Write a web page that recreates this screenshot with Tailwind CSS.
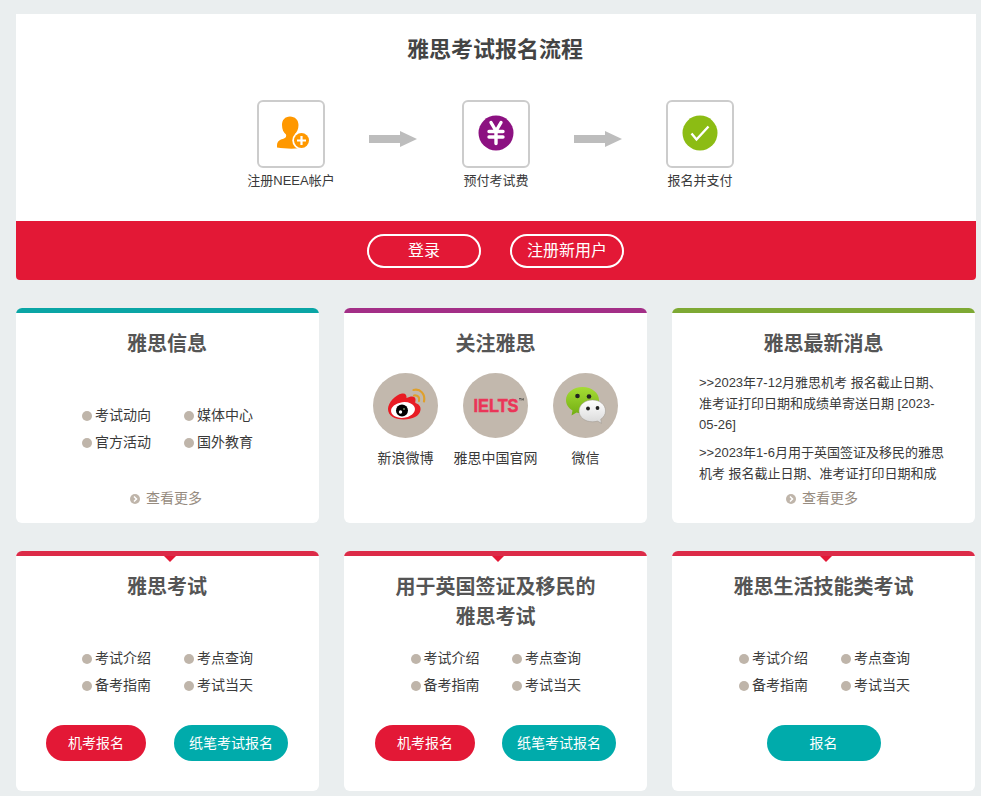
<!DOCTYPE html>
<html lang="zh-CN">
<head>
    <meta charset="UTF-8">
    <meta name="viewport" content="width=device-width, initial-scale=1.0">
    <title>雅思考试报名</title>
    <script src="https://cdn.jsdelivr.net/npm/@tailwindcss/browser@4"></script>
</head>
<body class="bg-[#eaeeef] text-[#3a3a3a] font-['Liberation_Sans','Noto_Sans_CJK_SC',sans-serif] overflow-hidden">
    <div class="w-[960px] ml-4 pt-3.5">

        <!-- Registration steps -->
        <section class="rounded-b overflow-hidden bg-white">
            <div class="h-[207px] pt-[21px]">
                <h1 class="text-[22px] leading-[30px] font-bold text-center text-[#444] pr-0.5">雅思考试报名流程</h1>
                <div class="flex justify-center mt-[35px] pr-px">
                    <div class="w-[100px] flex flex-col items-center">
                        <div class="size-[68px] border-2 border-[#ccc] rounded-md flex items-center justify-center">
                            <svg class="size-16" viewBox="0 0 64 64">
                                <path d="M31 14.500c5 0 8.500 3.500 8.500 8.500 0 4-1.500 7-3.500 9v3c0 2 11 3 11 8.500v2c-9 1.500-20 1.500-29 0v-2c0-5 4-6 7-7 2-.7 2.500-2 2-4-2.500-2-4-5-4-9.500 0-5 3-8.500 8-8.500z" fill="#ff9800"/>
                                <circle cx="42.500" cy="38.500" r="9.200" fill="#fff"/>
                                <circle cx="42.500" cy="38.500" r="7.500" fill="#ff9800"/>
                                <path d="M42.500 34v9M38 38.500h9" stroke="#fff" stroke-width="2.200"/>
                            </svg>
                        </div>
                        <p class="mt-1 text-[13px] leading-[18px] whitespace-nowrap">注册NEEA帐户</p>
                    </div>
                    <svg class="w-[48px] h-4 ml-7 mr-[29px] mt-[31px]" viewBox="0 0 48 16"><path d="M0 4h31V0l17 8-17 8v-4H0z" fill="#bdbdbd"/></svg>
                    <div class="w-[100px] flex flex-col items-center">
                        <div class="size-[68px] border-2 border-[#ccc] rounded-md flex items-center justify-center">
                            <svg class="size-16" viewBox="0 0 64 64">
                                <circle cx="32" cy="31" r="17.500" fill="#8c1181"/>
                                <path d="M27 20.500l5 8.500 5-8.500M32 29v12.500M25 29.500h14M25 35h14" fill="none" stroke="#fff" stroke-width="3.400" stroke-linecap="round"/>
                            </svg>
                        </div>
                        <p class="mt-1 text-[13px] leading-[18px] whitespace-nowrap">预付考试费</p>
                    </div>
                    <svg class="w-[48px] h-4 mx-7 mt-[31px]" viewBox="0 0 48 16"><path d="M0 4h31V0l17 8-17 8v-4H0z" fill="#bdbdbd"/></svg>
                    <div class="w-[100px] flex flex-col items-center">
                        <div class="size-[68px] border-2 border-[#ccc] rounded-md flex items-center justify-center">
                            <svg class="size-16" viewBox="0 0 64 64">
                                <circle cx="32" cy="31" r="17.500" fill="#8cbc14"/>
                                <path d="M23.500 31.500l5 6 12-13" fill="none" stroke="#fff" stroke-width="2.400"/>
                            </svg>
                        </div>
                        <p class="mt-1 text-[13px] leading-[18px] whitespace-nowrap">报名并支付</p>
                    </div>
                </div>
            </div>
            <div class="h-[59px] bg-[#e31836] flex justify-center gap-[29px] pt-[13px] pr-px text-white">
                <a class="w-[114px] h-[34px] border-2 border-white rounded-full text-center leading-[30px]">登录</a>
                <a class="w-[114px] h-[34px] border-2 border-white rounded-full text-center leading-[30px]">注册新用户</a>
            </div>
        </section>

        <!-- Info cards -->
        <div class="flex gap-[25px] mt-7">
            <section class="w-[303px] h-[215px] bg-white rounded-md overflow-hidden flex flex-col">
                <div class="h-[5px] shrink-0 bg-[#0aa5a5]"></div>
                <h2 class="mt-4 text-xl leading-[30px] font-bold text-center text-[#555] pr-px">雅思信息</h2>
                <ul class="grid grid-cols-[102px_102px] ml-[66px] mt-[43px] text-sm leading-[27px]">
                    <li class="flex items-center gap-[3px]"><i class="size-2.5 rounded-full bg-[#bfb5aa]"></i>考试动向</li>
                    <li class="flex items-center gap-[3px]"><i class="size-2.5 rounded-full bg-[#bfb5aa]"></i>媒体中心</li>
                    <li class="flex items-center gap-[3px]"><i class="size-2.5 rounded-full bg-[#bfb5aa]"></i>官方活动</li>
                    <li class="flex items-center gap-[3px]"><i class="size-2.5 rounded-full bg-[#bfb5aa]"></i>国外教育</li>
                </ul>
                <a class="mt-8 pr-[3px] flex justify-center items-center gap-1.5 text-sm text-[#968b80]">
                    <svg class="size-2.5 mt-px" viewBox="0 0 10 10"><circle cx="5" cy="5" r="5" fill="#bfb5aa"/><path d="M4 2.500L6.500 5 4 7.500" fill="none" stroke="#fff" stroke-width="1.500"/></svg>
                    查看更多
                </a>
            </section>

            <section class="w-[303px] h-[215px] bg-white rounded-md overflow-hidden flex flex-col">
                <div class="h-[5px] shrink-0 bg-[#a32f87]"></div>
                <h2 class="mt-4 text-xl leading-[30px] font-bold text-center text-[#555]">关注雅思</h2>
                <div class="flex justify-center mt-3.5 text-sm">
                    <div class="w-[90px] flex flex-col items-center">
                        <svg class="size-[65px]" viewBox="0 0 65 65">
                            <circle cx="32.500" cy="32.500" r="32.500" fill="#c2b8ad"/>
                            <path d="M15 36c0-6 7-14 14-15.500 3-.6 5 1 4.500 4.500 4-2 9-2.500 9 1.500 0 2-.5 3 0 3.500 3 1 5.500 3 5 7-.8 6-8 9.500-17 9.500-9 0-15.500-4-15.500-10.500z" fill="#e81c24"/>
                            <ellipse cx="30" cy="37" rx="12" ry="7.800" fill="#fff" transform="rotate(-7 30 37)"/>
                            <circle cx="29" cy="37.500" r="6" fill="#000"/>
                            <circle cx="27.500" cy="39" r="1.700" fill="#fff"/>
                            <circle cx="31" cy="36" r=".8" fill="#bde8b0"/>
                            <path d="M40.500 17c7-1.500 12 4 10.500 11.500M41 22.500c4-.5 6 2 5 5.500" fill="none" stroke="#dfa02c" stroke-width="2.200" stroke-linecap="round"/>
                        </svg>
                        <p class="mt-2.5">新浪微博</p>
                    </div>
                    <div class="w-[90px] flex flex-col items-center">
                        <svg class="size-[65px]" viewBox="0 0 65 65">
                            <circle cx="32.500" cy="32.500" r="32.500" fill="#c2b8ad"/>
                            <text x="10.500" y="38.500" textLength="45" lengthAdjust="spacingAndGlyphs" class="text-[19px] font-bold" fill="#ea3558" stroke="#ea3558" stroke-width=".6">IELTS</text>
                            <path d="M56 25.500h2M57 25.500v2M58.800 27.500v-2l.8 1 .8-1v2" fill="none" stroke="#333" stroke-width=".6"/>
                        </svg>
                        <p class="mt-2.5 whitespace-nowrap">雅思中国官网</p>
                    </div>
                    <div class="w-[90px] flex flex-col items-center">
                        <svg class="size-[65px]" viewBox="0 0 65 65">
                            <defs>
                                <linearGradient id="green" x2="0" y2="1"><stop stop-color="#a5dc35"/><stop offset="1" stop-color="#72ae12"/></linearGradient>
                                <linearGradient id="gray" x2="0" y2="1"><stop stop-color="#fff"/><stop offset="1" stop-color="#d9d9d9"/></linearGradient>
                            </defs>
                            <circle cx="32.500" cy="32.500" r="32.500" fill="#c2b8ad"/>
                            <path d="M29.500 14c9.500 0 16.500 6 16.500 13s-7 13.500-16.500 13.500c-2 0-4-.3-6-.9L18.500 42.500l1-5C15.500 35 13 31.500 13 27c0-7 7-13 16.500-13z" fill="url(#green)"/>
                            <circle cx="24.500" cy="23" r="2.300" fill="#222"/><circle cx="36" cy="23.500" r="2.300" fill="#222"/>
                            <path d="M39.500 27c7.500 0 13 4.800 13 11 0 3.500-2 6.500-4.800 8.300l.8 4-4-2.200c-1.500.5-3.300.7-5 .7-7.500 0-13.500-4.600-13.500-10.800S32 27 39.500 27z" fill="url(#gray)" stroke="#9b948c" stroke-width=".5"/>
                            <circle cx="35" cy="35.500" r="1.900" fill="#222"/><circle cx="44.500" cy="35" r="1.900" fill="#222"/>
                        </svg>
                        <p class="mt-2.5">微信</p>
                    </div>
                </div>
            </section>

            <section class="w-[303px] h-[215px] bg-white rounded-md overflow-hidden flex flex-col">
                <div class="h-[5px] shrink-0 bg-[#7ea934]"></div>
                <h2 class="mt-4 text-xl leading-[30px] font-bold text-center text-[#555]">雅思最新消息</h2>
                <div class="ml-[27px] mt-[13px] h-[113px] overflow-hidden text-[13px] leading-[21px] whitespace-nowrap">
                    <p class="mb-[7px]">&gt;&gt;2023年7-12月雅思机考 报名截止日期、<br>准考证打印日期和成绩单寄送日期 [2023-<br>05-26]</p>
                    <p>&gt;&gt;2023年1-6月用于英国签证及移民的雅思<br>机考 报名截止日期、准考证打印日期和成</p>
                </div>
                <a class="mt-[3px] pr-[3px] flex justify-center items-center gap-1.5 text-sm text-[#968b80]">
                    <svg class="size-2.5 mt-px" viewBox="0 0 10 10"><circle cx="5" cy="5" r="5" fill="#bfb5aa"/><path d="M4 2.500L6.500 5 4 7.500" fill="none" stroke="#fff" stroke-width="1.500"/></svg>
                    查看更多
                </a>
            </section>
        </div>

        <!-- Exam cards -->
        <div class="flex gap-[25px] mt-7">
            <section class="w-[303px] h-60 bg-white rounded-md overflow-hidden flex flex-col">
                <div class="h-[5px] shrink-0 bg-[#dc2b48]"></div>
                <svg class="w-3 h-1.5 ml-[148px] shrink-0" viewBox="0 0 12 6"><path d="M0 0h12L6 6z" fill="#e31836"/></svg>
                <h2 class="mt-2.5 h-[60px] text-xl leading-[30px] font-bold text-center text-[#555] pr-px">雅思考试</h2>
                <ul class="grid grid-cols-[102px_102px] ml-[66px] mt-[13px] text-sm leading-[27px]">
                    <li class="flex items-center gap-[3px]"><i class="size-2.5 rounded-full bg-[#bfb5aa]"></i>考试介绍</li>
                    <li class="flex items-center gap-[3px]"><i class="size-2.5 rounded-full bg-[#bfb5aa]"></i>考点查询</li>
                    <li class="flex items-center gap-[3px]"><i class="size-2.5 rounded-full bg-[#bfb5aa]"></i>备考指南</li>
                    <li class="flex items-center gap-[3px]"><i class="size-2.5 rounded-full bg-[#bfb5aa]"></i>考试当天</li>
                </ul>
                <div class="flex gap-7 ml-[30px] mt-[26px] text-sm leading-9 text-white text-center">
                    <a class="w-[100px] h-9 rounded-full bg-[#e31836]">机考报名</a>
                    <a class="w-[114px] h-9 rounded-full bg-[#00abab]">纸笔考试报名</a>
                </div>
            </section>

            <section class="w-[303px] h-60 bg-white rounded-md overflow-hidden flex flex-col">
                <div class="h-[5px] shrink-0 bg-[#dc2b48]"></div>
                <svg class="w-3 h-1.5 ml-[148px] shrink-0" viewBox="0 0 12 6"><path d="M0 0h12L6 6z" fill="#e31836"/></svg>
                <h2 class="mt-2.5 h-[60px] text-xl leading-[30px] font-bold text-center text-[#555]">用于英国签证及移民的<br>雅思考试</h2>
                <ul class="grid grid-cols-[101.500px_102px] ml-[66.500px] mt-[13px] text-sm leading-[27px]">
                    <li class="flex items-center gap-[3px]"><i class="size-2.5 rounded-full bg-[#bfb5aa]"></i>考试介绍</li>
                    <li class="flex items-center gap-[3px]"><i class="size-2.5 rounded-full bg-[#bfb5aa]"></i>考点查询</li>
                    <li class="flex items-center gap-[3px]"><i class="size-2.5 rounded-full bg-[#bfb5aa]"></i>备考指南</li>
                    <li class="flex items-center gap-[3px]"><i class="size-2.5 rounded-full bg-[#bfb5aa]"></i>考试当天</li>
                </ul>
                <div class="flex gap-[27px] ml-[31px] mt-[26px] text-sm leading-9 text-white text-center">
                    <a class="w-[100px] h-9 rounded-full bg-[#e31836]">机考报名</a>
                    <a class="w-[114px] h-9 rounded-full bg-[#00abab]">纸笔考试报名</a>
                </div>
            </section>

            <section class="w-[303px] h-60 bg-white rounded-md overflow-hidden flex flex-col">
                <div class="h-[5px] shrink-0 bg-[#dc2b48]"></div>
                <svg class="w-3 h-1.5 ml-[148px] shrink-0" viewBox="0 0 12 6"><path d="M0 0h12L6 6z" fill="#e31836"/></svg>
                <h2 class="mt-2.5 h-[60px] text-xl leading-[30px] font-bold text-center text-[#555]">雅思生活技能类考试</h2>
                <ul class="grid grid-cols-[102px_102px] ml-[67px] mt-[13px] text-sm leading-[27px]">
                    <li class="flex items-center gap-[3px]"><i class="size-2.5 rounded-full bg-[#bfb5aa]"></i>考试介绍</li>
                    <li class="flex items-center gap-[3px]"><i class="size-2.5 rounded-full bg-[#bfb5aa]"></i>考点查询</li>
                    <li class="flex items-center gap-[3px]"><i class="size-2.5 rounded-full bg-[#bfb5aa]"></i>备考指南</li>
                    <li class="flex items-center gap-[3px]"><i class="size-2.5 rounded-full bg-[#bfb5aa]"></i>考试当天</li>
                </ul>
                <div class="flex justify-center mt-[26px] text-sm leading-9 text-white text-center">
                    <a class="w-[114px] h-9 rounded-full bg-[#00abab]">报名</a>
                </div>
            </section>
        </div>
    </div>
</body>
</html>
